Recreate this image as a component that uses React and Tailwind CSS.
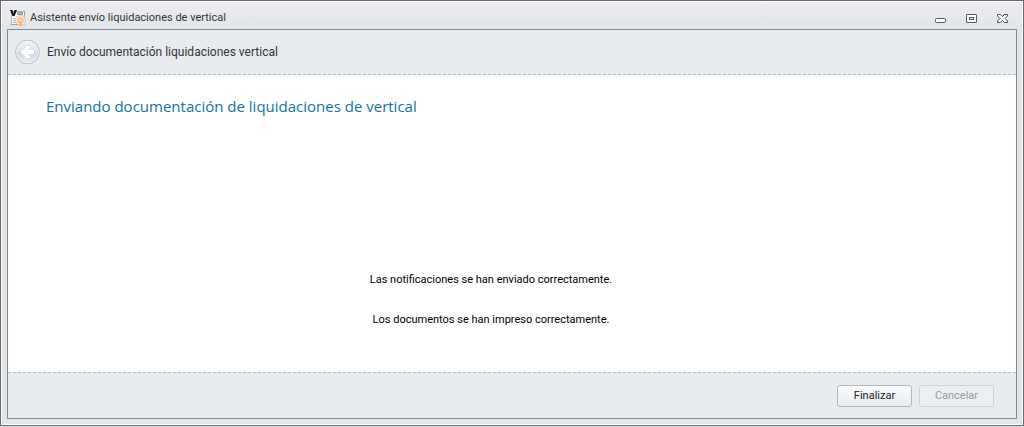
import { useState } from 'react';

const messages = [
  'Las notificaciones se han enviado correctamente.',
  'Los documentos se han impreso correctamente.'
];

// Small document logo shown in the title bar
const AppIcon = () => (
  <svg width="16" height="16" viewBox="0 0 16 16" aria-hidden="true">
    <path d="M1.500 1.500h13v13h-13z" fill="#f4f5f6" stroke="#b4b8c0" />
    <path d="M7.500 2.500h5v2h-5z" fill="#a9c8ae" stroke="#7ba486" />
    <path d="M14.500 1v5" stroke="#8a8f99" strokeDasharray="1.500 1" />
    <path d="M3 8.500h3M3 10.500h2M3 12.500h3" stroke="#b0b4bb" />
    <path d="M1 14.500h6" stroke="#8d929b" strokeDasharray="1.500 1" />
    <path d="M0 0h2.500L3.500 3.500 4.500 0H7L4.500 6h-2z" fill="#111" />
    <circle cx="10.500" cy="10.500" r="5" fill="#fce6d8" stroke="#f3bf9f" />
    <circle cx="10.500" cy="10.500" r="2.500" fill="#fad6be" stroke="#f0a87c" />
    <path d="M10 11h1l1.500 5h-4z" fill="#f4b48c" />
  </svg>
);

const BackIcon = () => (
  <svg width="26" height="26" viewBox="0 0 26 26" aria-hidden="true">
    <defs>
      <linearGradient id="back-fill" x1="0" y1="0" x2="0" y2="1">
        <stop offset="0" stopColor="#f3f5f8" />
        <stop offset="0.5" stopColor="#e0e5e9" />
        <stop offset="0.52" stopColor="#ced6dd" />
        <stop offset="1" stopColor="#edf1f4" />
      </linearGradient>
    </defs>
    <circle cx="12.500" cy="13" r="11.800" fill="url(#back-fill)" stroke="#b4bac3" />
    <circle cx="12.500" cy="13" r="10.800" fill="none" stroke="#f0f3f6" />
    <path d="M5.500 13l6.500-6.500h3V9L13 11h6v4h-6l2 2v2.500h-3z" fill="#fff" stroke="#d3dae0" strokeLinejoin="round" />
    <path d="M6 13l6-6h2.500v2L12.500 11h6v4h-6l2 2v2H12z" fill="#fff" />
  </svg>
);

const MinimizeIcon = () => (
  <svg width="11" height="9" viewBox="0 0 11 9" aria-hidden="true">
    <rect x="0.500" y="4.500" width="10" height="4" rx="1" fill="#fafafa" stroke="#555963" />
  </svg>
);

const MaximizeIcon = () => (
  <svg width="11" height="9" viewBox="0 0 11 9" aria-hidden="true">
    <rect x="0.500" y="0.500" width="10" height="8" rx="0.500" fill="#fafafa" stroke="#555963" />
    <rect x="3.500" y="3.500" width="4" height="2" fill="#fafafa" stroke="#555963" />
  </svg>
);

const CloseIcon = () => (
  <svg width="11" height="9" viewBox="0 0 11 9" aria-hidden="true">
    <path
      d="M0.500 0.500h3l2 2 2-2h3v1.500L8 4.500l2.500 2.500v1.500h-3l-2-2-2 2h-3V7L3 4.500 0.500 2z"
      fill="#fafafa"
      stroke="#4a4e58"
      strokeLinejoin="round"
    />
  </svg>
);

const App = () => {
  const [finished, setFinished] = useState(false);

  return (
    <div className="flex min-h-screen flex-col bg-[#e3e6e9] pb-px font-['Roboto','Liberation_Sans',sans-serif] text-[#333]">
      <div className="flex flex-1 flex-col border border-[#676b76]">
        <div className="flex flex-1 flex-col border border-white bg-[#e3e6e8] px-[5px] pb-[5px]">
          {/* Title bar */}
          <header className="-mx-[5px] flex h-[27px] items-center justify-between bg-linear-to-b from-[#ececf1] to-[#e1e5e8] pt-[5px] pr-3.5 pl-2">
            <div className="flex items-center gap-1">
              <AppIcon />
              <h1 className="text-[11px] leading-4">Asistente envío liquidaciones de vertical</h1>
            </div>
            <div className="flex items-center gap-5">
              <button type="button" aria-label="Minimizar"><MinimizeIcon /></button>
              <button type="button" aria-label="Maximizar"><MaximizeIcon /></button>
              <button type="button" aria-label="Cerrar"><CloseIcon /></button>
            </div>
          </header>

          <div className="flex flex-1 flex-col border border-[#868a90] bg-[#e8ebf0]">
            {/* Wizard header */}
            <div className="flex h-[45px] items-center gap-1.5 border-b border-dashed border-[#b4b8c6] px-[7px]">
              <button type="button" aria-label="Atrás" disabled><BackIcon /></button>
              <h2 className="text-xs">Envío documentación liquidaciones vertical</h2>
            </div>

            <main className="flex flex-1 flex-col bg-white px-[38px] pt-[19px]">
              <h3 className="font-['Open_Sans','Liberation_Sans',sans-serif] text-[15px] leading-6 text-[#1571ad]">
                Enviando documentación de liquidaciones de vertical
              </h3>
              <div className="mt-auto mr-[42px] flex flex-col items-center gap-6 pb-11 text-[11px] leading-4 text-black">
                {messages.map((message) => (
                  <p key={message}>{message}</p>
                ))}
              </div>
            </main>

            {/* Actions */}
            <footer className="flex h-[46px] items-center justify-end gap-[7px] border-t border-dashed border-[#b4b8c6] pr-[22px] text-[11px] leading-4">
              <button
                type="button"
                onClick={() => setFinished(true)}
                className="h-[22px] w-[75px] rounded-[3px] border border-[#b3b8bf] bg-linear-to-b from-[#fafcfd] to-[#e9edf0] text-[#222]"
              >
                Finalizar
              </button>
              <button
                type="button"
                disabled={!finished}
                className="h-[22px] w-[75px] rounded-[3px] border border-[#cfd3d8] bg-[#eceff2] text-[#999ca1]"
              >
                Cancelar
              </button>
            </footer>
          </div>
        </div>
      </div>
    </div>
  );
};

export default App;
